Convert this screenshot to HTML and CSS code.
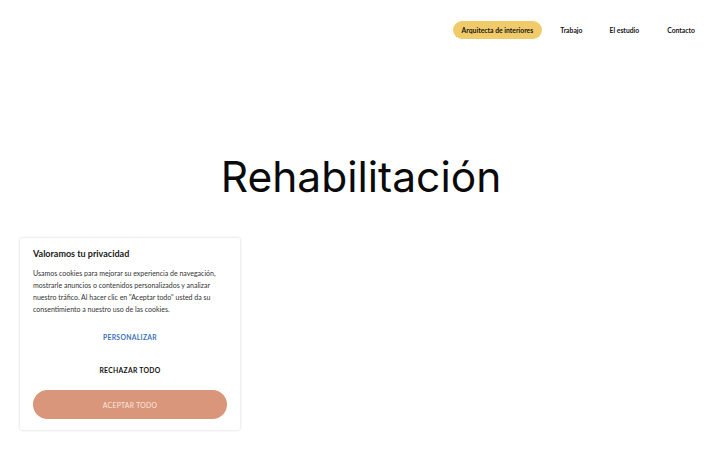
FILE: index.html
```html
<!DOCTYPE html>
<html lang="es">
<head>
<meta charset="utf-8">
<title>Rehabilitación</title>
<link rel="stylesheet" href="styles.css">
</head>
<body>
<header class="top">
  <nav class="nav">
    <a class="nav-item active" href="#">Arquitecta de interiores</a>
    <a class="nav-item" href="#">Trabajo</a>
    <a class="nav-item" href="#">El estudio</a>
    <a class="nav-item" href="#">Contacto</a>
  </nav>
</header>
<main class="hero">
  <h1 class="title">Rehabilitación</h1>
</main>
<aside class="cookie">
  <h2 class="cookie-title">Valoramos tu privacidad</h2>
  <p class="cookie-text">Usamos cookies para mejorar su experiencia de navegación, mostrarle anuncios o contenidos personalizados y analizar nuestro tráfico. Al hacer clic en "Aceptar todo" usted da su consentimiento a nuestro uso de las cookies.</p>
  <button class="btn btn-link">PERSONALIZAR</button>
  <button class="btn btn-plain">RECHAZAR TODO</button>
  <button class="btn btn-accept">ACEPTAR TODO</button>
</aside>
</body>
</html>
```
FILE: styles.css
```css
* { box-sizing: border-box; }
html, body { margin: 0; padding: 0; }
body {
  width: 720px;
  height: 450px;
  overflow: hidden;
  background: #fff;
  font-family: "Lato", "Inter", sans-serif;
  color: #111;
  position: relative;
}
.top {
  display: flex;
  justify-content: flex-end;
  padding: 21px 16px 0 0;
}
.nav {
  display: flex;
  align-items: center;
}
.nav-item {
  font-size: 6.8px;
  font-weight: 700;
  color: #151515;
  text-decoration: none;
  height: 18px;
  line-height: 18px;
  padding: 0 9px;
  margin-left: 9px;
  border-radius: 9px;
}
.nav-item.active {
  background: #f1cb6a;
  margin-left: 0;
}
.nav-item:nth-child(4) { margin-left: 10px; }
.hero {
  display: flex;
  justify-content: center;
  padding-top: 108px;
}
.title {
  margin: 0;
  font-family: "Inter", sans-serif;
  font-weight: 400;
  font-size: 42.5px;
  line-height: 60px;
  color: #0a0a0a;
  margin-left: 2px;
}
.cookie {
  position: absolute;
  left: 20px;
  top: 238px;
  width: 220px;
  height: 192px;
  background: #fff;
  box-shadow: 0 0 3px rgba(0,0,0,0.18);
  border-radius: 2px;
  padding: 10px 13px 10px 13px;
  display: flex;
  flex-direction: column;
}
.cookie-title {
  margin: 0 0 7px 0;
  font-size: 9px;
  font-weight: 700;
  line-height: 12px;
  color: #1a1a1a;
}
.cookie-text {
  margin: 0;
  font-size: 7px;
  line-height: 12px;
  color: #333;
}
.btn {
  border: 0;
  background: none;
  font-family: inherit;
  font-size: 6.8px;
  font-weight: 700;
  letter-spacing: 0.3px;
  cursor: pointer;
  padding: 0;
}
.btn-link {
  color: #3f73b8;
  margin-top: 14px;
  height: 16px;
}
.btn-plain {
  color: #111;
  margin-top: 17px;
  height: 16px;
}
.btn-accept {
  margin-top: 12px;
  height: 29px;
  border-radius: 15px;
  background: #d9967a;
  color: #fbe9df;
  font-weight: 400;
}
```
